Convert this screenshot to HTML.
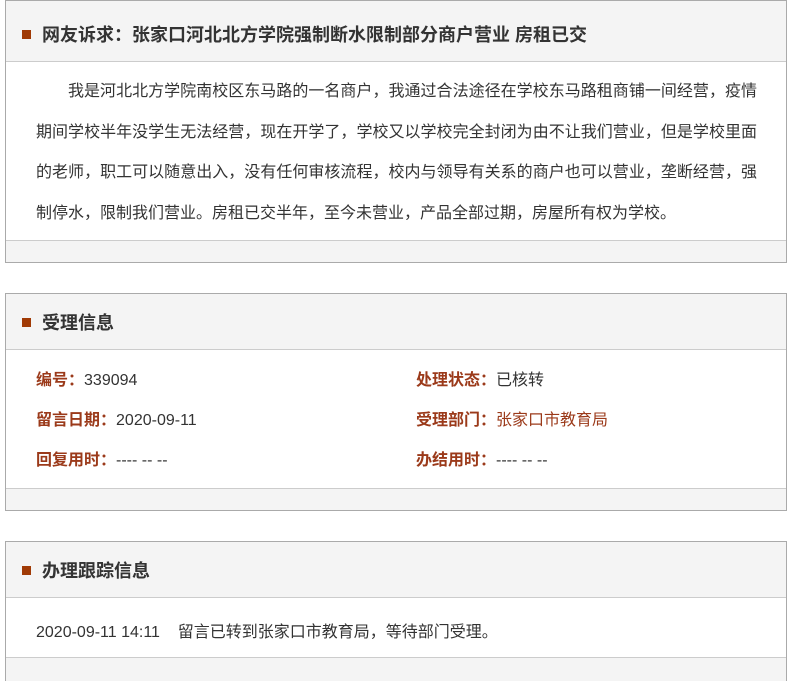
<!DOCTYPE html>
<html><head><meta charset="utf-8"><style>
*{margin:0;padding:0;box-sizing:border-box}
body{width:791px;height:665px;background:#fff;font-family:"Liberation Sans","Microsoft YaHei","Noto Sans CJK SC",sans-serif;color:#333;position:relative;overflow:hidden}
.box{position:absolute;left:5px;width:782px;border:1px solid #aaa;background:#fff}
.hd{background:#f4f4f4;border-bottom:1px solid #ccc;position:relative}
.hd span{position:absolute;left:36px;font-size:18px;font-weight:bold;color:#333;white-space:nowrap}
.hd i{position:absolute;left:16px;width:9px;height:9px;background:#a03a05}
.ft{position:absolute;left:0;right:0;bottom:0;background:#f4f4f4;border-top:1px solid #ccc}
.t{position:absolute;font-size:16px;white-space:nowrap}
.l{color:#9b3a1a;font-weight:bold}
.r{color:#9b3a1a}
</style></head><body>
<div class="box" style="top:0;height:263px">
 <div class="hd" style="height:61px"><i style="top:29px"></i><span style="top:20px">网友诉求：张家口河北北方学院强制断水限制部分商户营业 房租已交</span></div>
 <div style="position:absolute;left:30px;top:71px;width:721px;font-size:16px;line-height:40.5px;text-indent:32px;text-align:justify;color:#333">我是河北北方学院南校区东马路的一名商户，我通过合法途径在学校东马路租商铺一间经营，疫情期间学校半年没学生无法经营，现在开学了，学校又以学校完全封闭为由不让我们营业，但是学校里面的老师，职工可以随意出入，没有任何审核流程，校内与领导有关系的商户也可以营业，垄断经营，强制停水，限制我们营业。房租已交半年，至今未营业，产品全部过期，房屋所有权为学校。</div>
 <div class="ft" style="height:22px"></div>
</div>
<div class="box" style="top:293px;height:218px">
 <div class="hd" style="height:56px"><i style="top:24px"></i><span style="top:15px">受理信息</span></div>
 <div class="t" style="left:30px;top:72px"><span class="l">编号：</span>339094</div>
 <div class="t" style="left:30px;top:112px"><span class="l">留言日期：</span>2020-09-11</div>
 <div class="t" style="left:30px;top:152px"><span class="l">回复用时：</span>---- -- --</div>
 <div class="t" style="left:410px;top:72px"><span class="l">处理状态：</span>已核转</div>
 <div class="t" style="left:410px;top:112px"><span class="l">受理部门：</span><span class="r">张家口市教育局</span></div>
 <div class="t" style="left:410px;top:152px"><span class="l">办结用时：</span>---- -- --</div>
 <div class="ft" style="height:22px"></div>
</div>
<div class="box" style="top:541px;height:140px">
 <div class="hd" style="height:56px"><i style="top:24px"></i><span style="top:15px">办理跟踪信息</span></div>
 <div class="t" style="left:30px;top:76px">2020-09-11 14:11&nbsp;&nbsp;&nbsp;&nbsp;留言已转到张家口市教育局，等待部门受理。</div>
 <div class="ft" style="height:24px;bottom:auto;top:115px"></div>
</div>
</body></html>
